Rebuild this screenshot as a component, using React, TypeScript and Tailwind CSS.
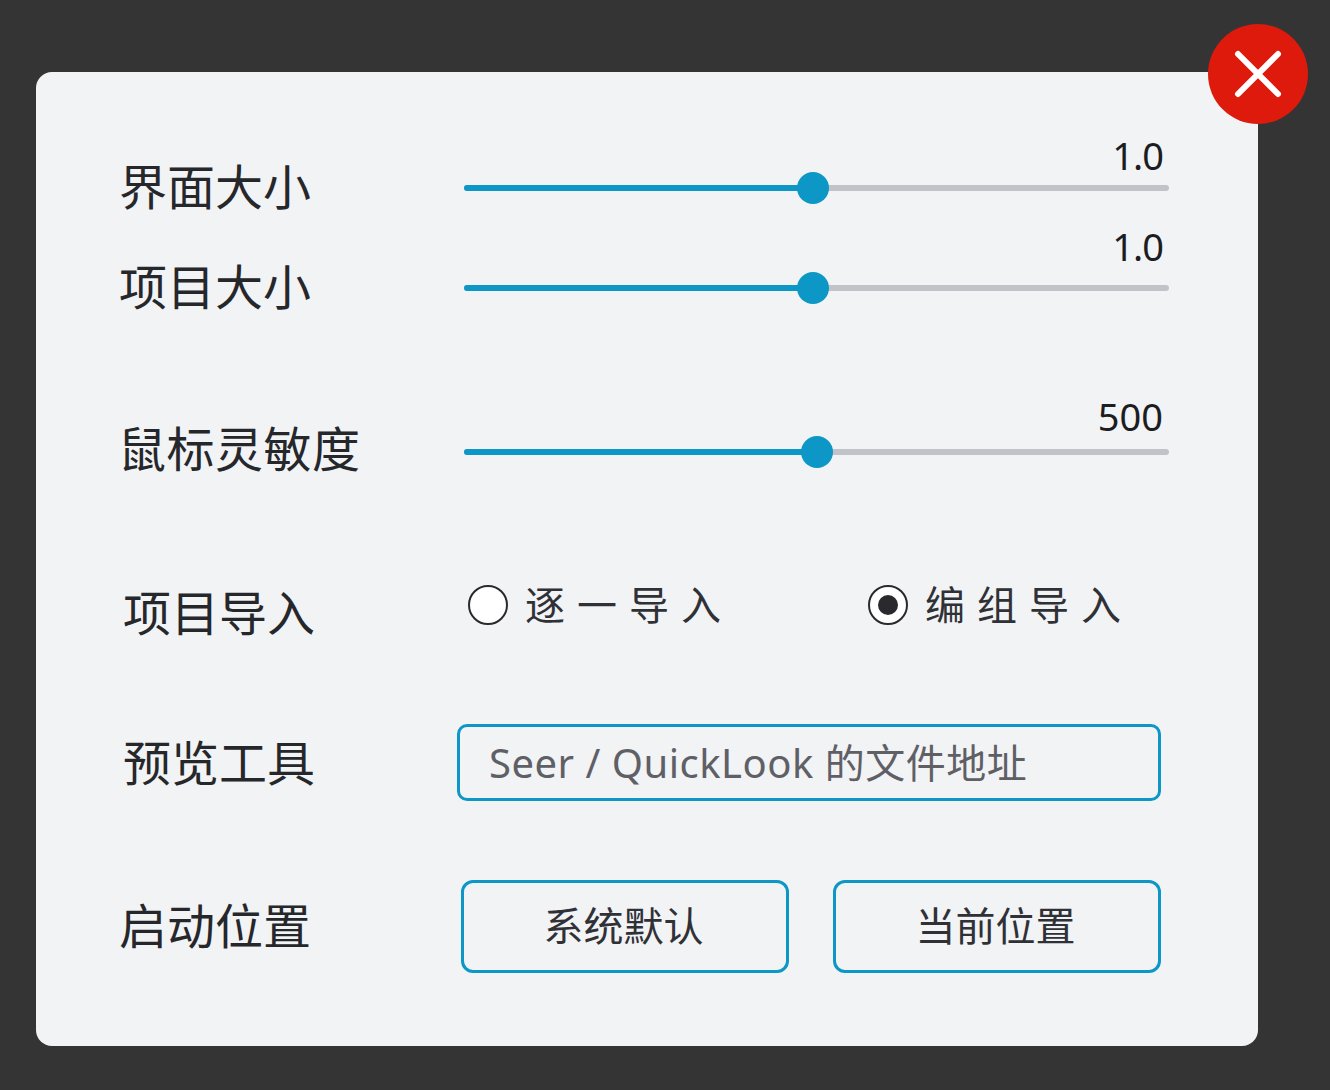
const font = "font-['Noto_Sans','Noto_Sans_CJK_SC',sans-serif]";

const Label = ({ text, className = "" }: { text: string; className?: string }) => (
    <div className={`text-[48px] leading-none text-[#26272b] whitespace-nowrap ${className}`}>{text}</div>
);

function Slider({ value, percent, valueClass }: { value: string; percent: number; valueClass: string }) {
    return (
        <div className="relative ml-[7px] h-[6px] w-[705px] translate-y-px rounded-full bg-[#c2c3c9]">
            <div className="h-full rounded-full bg-[#0c97c6]" style={{ width: `${percent}%` }} />
            <div
                className="absolute top-1/2 h-[32px] w-[32px] -translate-x-1/2 -translate-y-1/2 rounded-full bg-[#0c97c6]"
                style={{ left: `${percent}%` }}
            />
            <span className={`absolute right-[6px] text-[38px] leading-none text-[#1c1d21] ${valueClass}`}>{value}</span>
        </div>
    );
}

function Radio({ text, checked, className = "" }: { text: string; checked?: boolean; className?: string }) {
    return (
        <div className={`flex items-center gap-[17px] ${className}`}>
            <div className="flex h-[40px] w-[40px] items-center justify-center rounded-full border-2 border-[#2a2a2e] bg-white">
                {checked && <div className="h-[20px] w-[20px] rounded-full bg-[#2a2a2e]" />}
            </div>
            <span className="text-[40px] leading-none tracking-[12px] text-[#303136]">{text}</span>
        </div>
    );
}

const Btn = ({ text }: { text: string }) => (
    <button className="flex h-[93px] w-[328px] items-center justify-center rounded-[12px] border-[3px] border-[#0c97c6] pr-[3px] text-[40px] text-[#303136]">
        {text}
    </button>
);

export default function App() {
    return (
        <div className={`h-[1090px] w-[1330px] overflow-hidden bg-[#343434] pl-[36px] pt-[72px] ${font}`}>
            <div className="relative h-[974px] w-[1222px] rounded-[16px] bg-[#f2f3f5] pl-[84px] pt-[65px]">
                <div className="absolute -right-[50px] -top-[48px] flex h-[100px] w-[100px] items-center justify-center rounded-full bg-[#dd1a0c]">
                    <svg width="52" height="52" viewBox="0 0 52 52" fill="none" stroke="white" strokeWidth="6" strokeLinecap="round">
                        <path d="M6 6 L46 46" />
                        <path d="M46 6 L6 46" />
                    </svg>
                </div>

                <div className="grid h-[100px] grid-cols-[337px_1fr] items-center">
                    <Label text="界面大小" className="-ml-[1px]" />
                    <Slider value="1.0" percent={49.5} valueClass="-top-[49px] tracking-[-1px]" />
                </div>
                <div className="grid h-[100px] grid-cols-[337px_1fr] items-center">
                    <Label text="项目大小" className="-ml-[1px]" />
                    <Slider value="1.0" percent={49.5} valueClass="-top-[58px] tracking-[-1px]" />
                </div>
                <div className="mt-[64px] grid h-[100px] grid-cols-[337px_1fr] items-center">
                    <Label text="鼠标灵敏度" className="-ml-[2px] -translate-y-[2px] tracking-[0.5px]" />
                    <Slider value="500" percent={50.1} valueClass="-top-[52px]" />
                </div>
                <div className="mt-[59px] grid h-[100px] grid-cols-[337px_1fr] items-center">
                    <Label text="项目导入" className="ml-[3px] translate-y-[3px]" />
                    <div className="-mt-[10px] ml-[11px] flex">
                        <Radio text="逐一导入" className="w-[400px]" />
                        <Radio text="编组导入" checked />
                    </div>
                </div>
                <div className="mt-[52px] grid h-[100px] grid-cols-[337px_1fr] items-center">
                    <Label text="预览工具" className="ml-[3px] translate-y-px" />
                    <div className="flex h-[77px] w-[704px] items-center rounded-[10px] border-[3px] border-[#0c97c6] pl-[29px] pt-[2px] text-[40px] tracking-[0.5px] text-[#5f6066]">
                        Seer / QuickLook 的文件地址
                    </div>
                </div>
                <div className="mt-[64px] grid h-[100px] grid-cols-[337px_1fr] items-center">
                    <Label text="启动位置" className="-ml-[1px]" />
                    <div className="ml-[4px] flex gap-[44px]">
                        <Btn text="系统默认" />
                        <Btn text="当前位置" />
                    </div>
                </div>
            </div>
        </div>
    );
}
